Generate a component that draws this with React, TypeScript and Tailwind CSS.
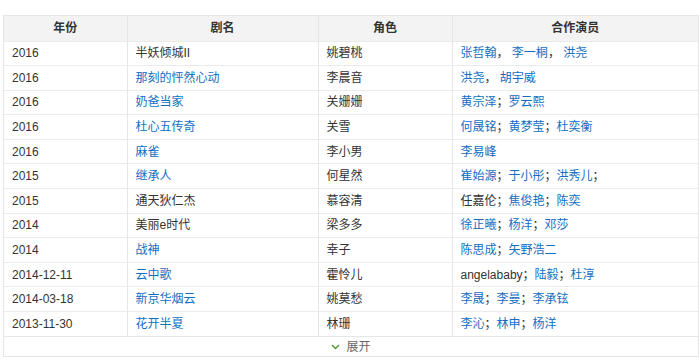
import React from 'react';

type Part = { t: string; link?: boolean };

interface Row {
  year: string;
  title: string;
  titleLink: boolean;
  role: string;
  cast: Part[];
}

const L = (t: string): Part => ({ t, link: true });
const S = (t: string): Part => ({ t });

const rows: Row[] = [
  { year: '2016', title: '半妖倾城II', titleLink: false, role: '姚碧桃', cast: [L('张哲翰'), S('， '), L('李一桐'), S('， '), L('洪尧')] },
  { year: '2016', title: '那刻的怦然心动', titleLink: true, role: '李晨音', cast: [L('洪尧'), S('， '), L('胡宇威')] },
  { year: '2016', title: '奶爸当家', titleLink: true, role: '关姗姗', cast: [L('黄宗泽'), S('；'), L('罗云熙')] },
  { year: '2016', title: '杜心五传奇', titleLink: true, role: '关雪', cast: [L('何晟铭'), S('；'), L('黄梦莹'), S('；'), L('杜奕衡')] },
  { year: '2016', title: '麻雀', titleLink: true, role: '李小男', cast: [L('李易峰')] },
  { year: '2015', title: '继承人', titleLink: true, role: '何星然', cast: [L('崔始源'), S('；'), L('于小彤'), S('；'), L('洪秀儿'), S('；')] },
  { year: '2015', title: '通天狄仁杰', titleLink: false, role: '慕容清', cast: [S('任嘉伦；'), L('焦俊艳'), S('；'), L('陈奕')] },
  { year: '2014', title: '美丽e时代', titleLink: false, role: '梁多多', cast: [L('徐正曦'), S('；'), L('杨洋'), S('；'), L('邓莎')] },
  { year: '2014', title: '战神', titleLink: true, role: '幸子', cast: [L('陈思成'), S('；'), L('矢野浩二')] },
  { year: '2014-12-11', title: '云中歌', titleLink: true, role: '霍怜儿', cast: [S('angelababy；'), L('陆毅'), S('；'), L('杜淳')] },
  { year: '2014-03-18', title: '新京华烟云', titleLink: true, role: '姚莫愁', cast: [L('李晟'), S('；'), L('李曼'), S('；'), L('李承铉')] },
  { year: '2013-11-30', title: '花开半夏', titleLink: true, role: '林珊', cast: [L('李沁'), S('；'), L('林申'), S('；'), L('杨洋')] },
];

export default function App() {
  return (
    <div
      className="w-[700px] h-[364px] bg-white pt-[15px] pl-[3px] text-[12px] text-[#333]"
      style={{ fontFamily: '"Liberation Sans", Arial, "Noto Sans CJK SC", sans-serif' }}
    >
      <div className="w-[696px] border border-[#e6e6e6]">
        <table className="w-full table-fixed border-collapse">
          <colgroup>
            <col className="w-[123px]" />
            <col className="w-[191px]" />
            <col className="w-[134px]" />
            <col />
          </colgroup>
          <thead>
            <tr className="h-[25px] bg-[#f3f3f3]">
              {['年份', '剧名', '角色', '合作演员'].map((h, i) => (
                <th
                  key={h}
                  className={`font-bold text-[12px] text-[#333] text-center ${i > 0 ? 'border-l border-[#e6e6e6]' : ''}`}
                >
                  {h}
                </th>
              ))}
            </tr>
          </thead>
          <tbody>
            {rows.map((r, idx) => (
              <tr key={idx} className="h-[24.6px] border-t border-[#ebebeb]">
                <td className="px-2 whitespace-nowrap">{r.year}</td>
                <td className="px-2 border-l border-[#e6e6e6] whitespace-nowrap">
                  <span className={r.titleLink ? 'text-[#136ec2]' : ''}>{r.title}</span>
                </td>
                <td className="px-2 border-l border-[#e6e6e6] whitespace-nowrap">{r.role}</td>
                <td className="px-2 border-l border-[#e6e6e6] whitespace-nowrap">
                  {r.cast.map((p, i) => (
                    <span key={i} className={p.link ? 'text-[#136ec2]' : 'text-[#333]'}>
                      {p.t}
                    </span>
                  ))}
                </td>
              </tr>
            ))}
          </tbody>
        </table>
        <div className="h-[20px] border-t border-[#e6e6e6] flex items-center justify-center gap-[6px] text-[#666]">
          <svg width="9" height="6" viewBox="0 0 9 6" fill="none">
            <path d="M1 1l3.5 3.5L8 1" stroke="#4c9a2a" strokeWidth="1.4" />
          </svg>
          <span>展开</span>
        </div>
      </div>
    </div>
  );
}
